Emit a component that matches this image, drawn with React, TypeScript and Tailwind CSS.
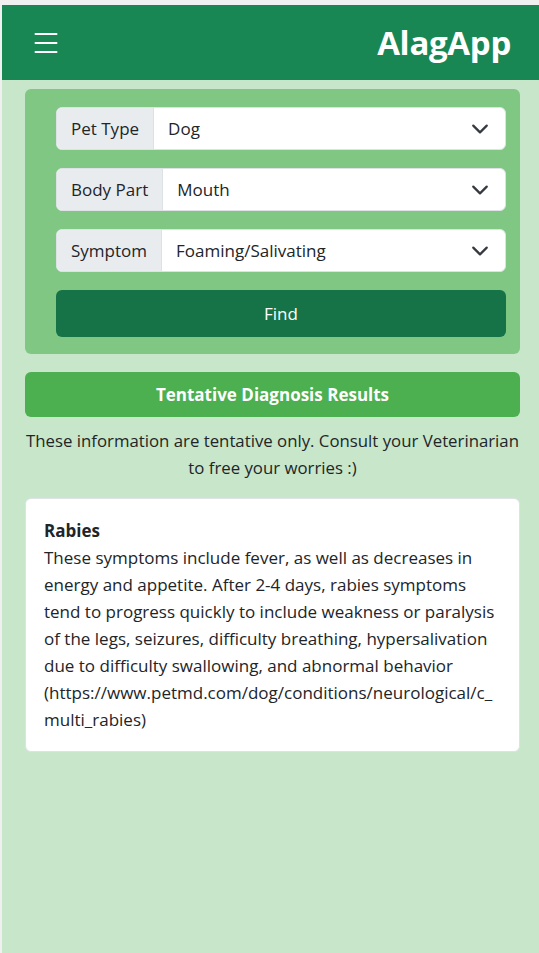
import React from "react";

const Chevron = () => (
  <svg width="18" height="18" viewBox="0 0 16 16" fill="none" stroke="#343a40" strokeWidth="2" strokeLinecap="round" strokeLinejoin="round">
    <path d="M2 5l6 6 6-6" />
  </svg>
);

const Field = ({ label, value }: { label: string; value: string }) => (
  <div className="flex h-[43px] rounded-[6px] border border-[#dee2e6] bg-white overflow-hidden">
    <div className="flex items-center px-[14px] bg-[#e9ecef] border-r border-[#dee2e6] text-[#212529]">{label}</div>
    <div className="flex flex-1 items-center justify-between pl-[14px] pr-[16px] text-[#212529]">
      <span>{value}</span>
      <Chevron />
    </div>
  </div>
);

export default function App() {
  const lines = [
    "These symptoms include fever, as well as decreases in",
    "energy and appetite. After 2-4 days, rabies symptoms",
    "tend to progress quickly to include weakness or paralysis",
    "of the legs, seizures, difficulty breathing, hypersalivation",
    "due to difficulty swallowing, and abnormal behavior",
    "(https://www.petmd.com/dog/conditions/neurological/c_",
    "multi_rabies)",
  ];
  return (
    <div
      className="min-h-[953px] bg-[#f0f0f0] pt-[5px] pl-[2px] flex flex-col text-[17px] leading-[27px]"
      style={{ fontFamily: '"Open Sans", "Noto Sans", sans-serif' }}
    >
      <header className="h-[75px] bg-[#198754] flex items-center justify-between pl-[32px] pr-[28px]">
        <svg width="24" height="22" viewBox="0 0 24 22" fill="none" stroke="white" strokeWidth="2" strokeLinecap="round">
          <path d="M1.5 2h21M1.5 11h21M1.5 20h21" />
        </svg>
        <div className="text-white font-bold text-[33px] leading-none tracking-[-0.3px]">AlagApp</div>
      </header>
      <main className="flex-1 bg-[#c8e6c9] pl-[23px] pr-[19px] pt-[9px] pb-[20px] flex flex-col">
        <div className="bg-[#81c784] rounded-[6px] pt-[18px] pb-[17px] pl-[31px] pr-[14px] flex flex-col gap-[18px]">
          <Field label="Pet Type" value="Dog" />
          <Field label="Body Part" value="Mouth" />
          <Field label="Symptom" value="Foaming/Salivating" />
          <button className="h-[47px] rounded-[6px] bg-[#157347] text-white">Find</button>
        </div>
        <div className="mt-[18px] h-[45px] rounded-[6px] bg-[#4caf50] flex items-center justify-center text-white font-bold">
          Tentative Diagnosis Results
        </div>
        <p className="mt-[10px] text-center text-[#212529] whitespace-nowrap text-[16.8px]">
          These information are tentative only. Consult your Veterinarian
          <br />
          to free your worries :)
        </p>
        <div className="mt-[17px] bg-white rounded-[6px] border border-[#dee2e6] pt-[18px] pb-[18px] px-[18px] text-[#212529]">
          <div className="font-bold">Rabies</div>
          {lines.map((l) => (
            <div key={l} className="whitespace-nowrap">{l}</div>
          ))}
        </div>
      </main>
    </div>
  );
}
